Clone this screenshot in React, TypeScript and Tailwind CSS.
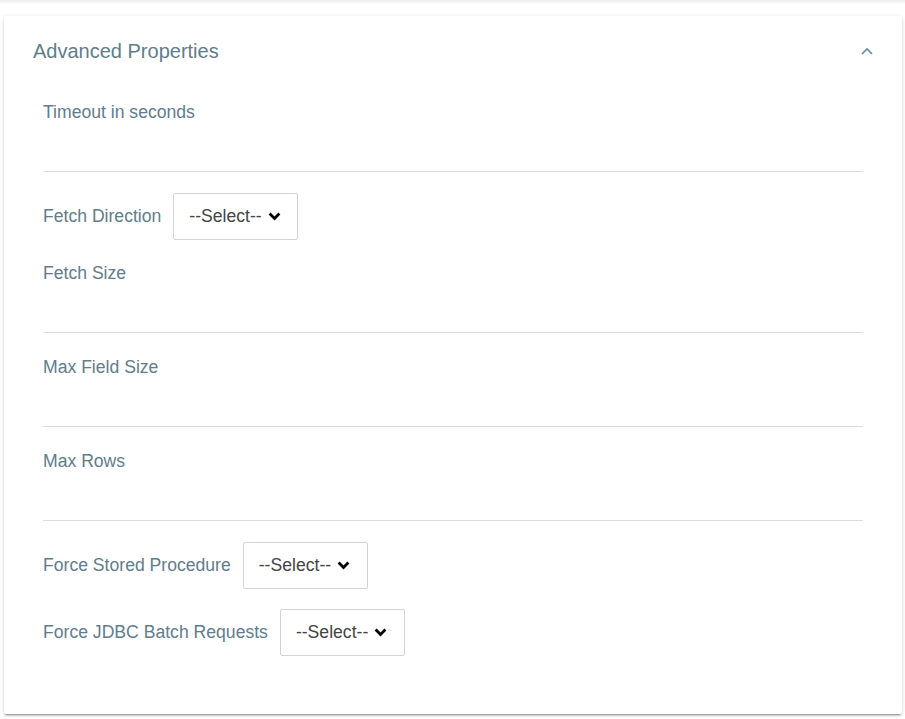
import React from "react";

type Field =
  | { kind: "text"; label: string }
  | { kind: "select"; label: string };

const fields: Field[] = [
  { kind: "text", label: "Timeout in seconds" },
  { kind: "select", label: "Fetch Direction" },
  { kind: "text", label: "Fetch Size" },
  { kind: "text", label: "Max Field Size" },
  { kind: "text", label: "Max Rows" },
  { kind: "select", label: "Force Stored Procedure" },
  { kind: "select", label: "Force JDBC Batch Requests" },
];

function SelectBox() {
  return (
    <div className="flex h-[47px] w-[125px] items-center gap-[6px] rounded-[2px] border border-[#d0d4d8] bg-white pl-[15px] text-[17.6px] text-[#444]">
      <span>--Select--</span>
      <svg width="13" height="9" viewBox="0 0 13 9" fill="none">
        <path d="M1.6 1.6 L6.5 6.5 L11.4 1.6" stroke="#000" strokeWidth="2.8" />
      </svg>
    </div>
  );
}

function TextField({ label }: { label: string }) {
  return (
    <div className="mb-[21px] pt-[4px]">
      <div className="h-[18px] leading-[18px] text-[#607d8b]">{label}</div>
      <div className="h-[51px] border-b border-[#dcdcdc]" />
    </div>
  );
}

function SelectField({ label }: { label: string }) {
  return (
    <div className="mb-[20px] flex items-center gap-[12px]">
      <span className="text-[#607d8b]">{label}</span>
      <SelectBox />
    </div>
  );
}

export default function App() {
  return (
    <div
      className="min-h-[719px] bg-white text-[17.6px]"
      style={{ fontFamily: '"Liberation Sans", Arial, sans-serif' }}
    >
      <div className="h-[5px] bg-linear-to-b from-[#ededed] to-white" />
      <div className="ml-[4px] mr-[3px] mt-[11px] h-[698px] rounded-[2px] bg-white shadow-[0_3px_1px_-2px_rgba(0,0,0,0.2),0_2px_2px_0_rgba(0,0,0,0.14),0_1px_5px_0_rgba(0,0,0,0.12)]">
        <div className="flex h-[70px] items-center justify-between pl-[29px] pr-[29px]">
          <h2 className="text-[20px] text-[#607d8b]">Advanced Properties</h2>
          <svg width="12" height="8" viewBox="0 0 12 8" fill="none">
            <path d="M1 7 L6 2 L11 7" stroke="#5b8db5" strokeWidth="1.6" />
          </svg>
        </div>
        <div className="px-[39px] pt-[13px]">
          {fields.map((f) =>
            f.kind === "text" ? (
              <TextField key={f.label} label={f.label} />
            ) : (
              <SelectField key={f.label} label={f.label} />
            )
          )}
        </div>
      </div>
    </div>
  );
}
